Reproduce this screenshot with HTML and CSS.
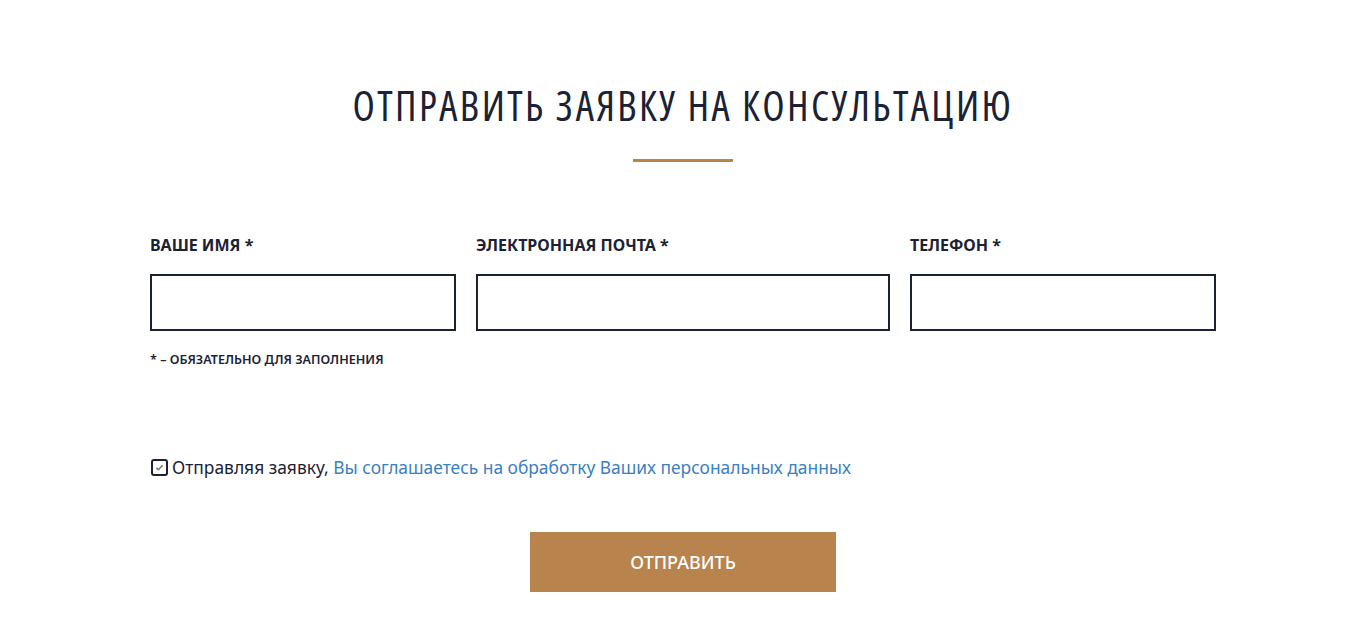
FILE: index.html
```html
<!DOCTYPE html>
<html>

<head>
	<title>Отправить заявку на консультацию</title>
	<link rel="stylesheet" href="styles.css">
</head>

<body>
	<div class="main">
		<h2 class="title">Отправить заявку на консультацию</h2>
		<div class="line"></div>
		<div class="fields">
			<div class="field name">
				<label>Ваше имя *</label>
				<input type="text">
			</div>
			<div class="field mail">
				<label>Электронная почта *</label>
				<input type="text">
			</div>
			<div class="field phone">
				<label>Телефон *</label>
				<input type="text">
			</div>
		</div>
		<div class="note">* – обязательно для заполнения</div>
		<div class="agree">
			<span class="check">
				<svg width="9" height="9" viewBox="0 0 10 10"><path d="M1.5 5.2l2.3 2.3 4.7-5" fill="none" stroke="#777" stroke-width="1.7"/></svg>
			</span>
			<span>Отправляя заявку, <a href="#">Вы соглашаетесь на обработку Ваших персональных данных</a></span>
		</div>
		<div class="row">
			<button>Отправить</button>
		</div>
	</div>
</body>

</html>
```

FILE: styles.css
```css
html,
body {
	margin: 0;
	padding: 0;
	background: #fff;
}

body {
	font-family: "Noto Sans", "Open Sans", sans-serif;
	color: #1c2235;
}

.main {
	display: flex;
	flex-direction: column;
	padding: 81px 145px 40px 150px;
}

.title {
	margin: 0;
	text-align: center;
	font-family: "Open Sans", sans-serif;
	font-stretch: 75%;
	font-size: 41px;
	font-weight: 400;
	line-height: 48px;
	letter-spacing: 2.4px;
	text-transform: uppercase;
}

.line {
	width: 100px;
	height: 3px;
	background: #b8834d;
	margin: 30px auto 0;
}

.fields {
	display: flex;
	gap: 20px;
	margin-top: 72px;
}

.field {
	display: flex;
	flex-direction: column;
}

.name,
.phone {
	width: 306px;
}

.mail {
	width: 414px;
}

label {
	font-size: 16px;
	font-weight: 700;
	text-transform: uppercase;
	line-height: 22px;
}

input {
	margin-top: 18px;
	height: 57px;
	box-sizing: border-box;
	border: 2px solid #1c2235;
	padding: 0 12px;
	font: inherit;
	outline: none;
}

.note {
	margin-top: 20px;
	font-size: 12.6px;
	font-weight: 600;
	text-transform: uppercase;
	line-height: 18px;
}

.agree {
	display: flex;
	align-items: center;
	gap: 4px;
	margin-top: 86px;
	font-size: 17.4px;
	line-height: 24px;
}

.check {
	display: flex;
	justify-content: center;
	align-items: center;
	width: 13px;
	height: 13px;
	border: 2px solid #1c2235;
	border-radius: 3px;
	margin-left: 1px;
}

.agree a {
	color: #3a7fc1;
	text-decoration: none;
}

.row {
	display: flex;
	justify-content: center;
	margin-top: 53px;
}

button {
	width: 306px;
	height: 60px;
	border: 0;
	background: #b8834d;
	color: #fff;
	font-family: inherit;
	font-size: 18px;
	font-weight: 500;
	text-transform: uppercase;
	cursor: pointer;
}
```
